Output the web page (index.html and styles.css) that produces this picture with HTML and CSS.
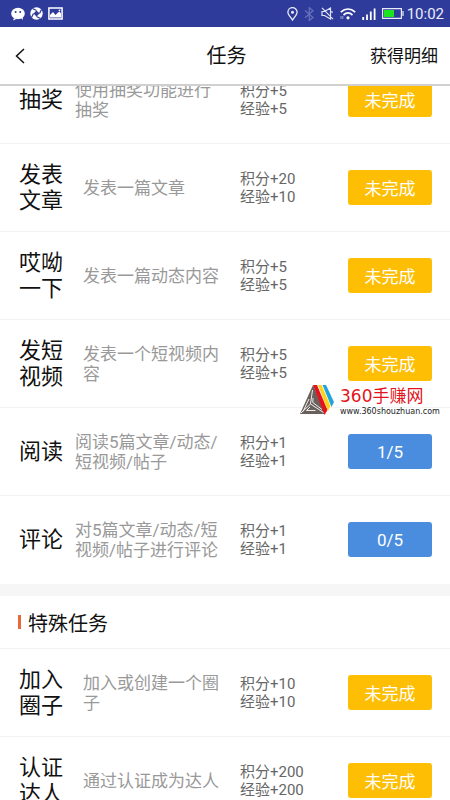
FILE: index.html
```html
<!DOCTYPE html>
<html lang="zh-CN">
<head>
<meta charset="utf-8">
<meta name="viewport" content="width=device-width, initial-scale=1">
<title>任务</title>
<link rel="stylesheet" href="styles.css">
</head>
<body>
<div class="status">
  <div class="status-group">
    <svg width="14" height="14" viewBox="0 0 14 14"><ellipse cx="7" cy="6.5" rx="6.8" ry="5.8" fill="#fff"/><path d="M3 11l-1 2.500 3.500-1.500zM10 11l2 2-.3-3z" fill="#fff"/><circle cx="4.600" cy="5" r="1" fill="#2f3b9b"/><circle cx="9.200" cy="5" r="1" fill="#2f3b9b"/></svg>
    <svg width="13" height="13" viewBox="0 0 13 13"><circle cx="6.500" cy="6.500" r="6.200" fill="#fff"/><path d="M6.500 3.500l3 3-3 3-3-3z" fill="#2f3b9b"/><path d="M6.500 3.500L2.500 1.500M9.500 6.500l2-4M6.500 9.500l4 2M3.500 6.500l-2 4" stroke="#2f3b9b" stroke-width="1.300"/></svg>
    <svg width="15" height="13" viewBox="0 0 15 13"><path d="M.9.900h13.200v11.200H.9z" fill="none" stroke="#fff" stroke-width="1.500"/><path d="M2 10.500V8l3-3 2.500 3L10 5.500l1.500-1 1.500 2v4z" fill="#fff"/><circle cx="11.500" cy="3.300" r=".9" fill="#fff"/></svg>
  </div>
  <div class="status-group right">
    <div class="status-group icons">
      <svg width="11" height="14" viewBox="0 0 11 14"><path d="M5.500 13C3 9.500.9 7.500.9 5.200a4.600 4.600 0 0 1 9.200 0C10.100 7.500 8 9.500 5.500 13z" fill="none" stroke="#e9ebfa" stroke-width="1.300"/><circle cx="5.500" cy="5.200" r="1.500" fill="#e9ebfa"/></svg>
      <svg width="11" height="14" viewBox="0 0 11 14"><path d="M1 3.500l8 7-3.700 3V.7L9 3.700l-8 7" fill="none" stroke="#6570bb" stroke-width="1.300"/></svg>
      <svg width="13" height="13" viewBox="0 0 13 13"><path d="M1 4.500h2.500L9.500 1v11l-6-3.500H1zM1 .8l11 11.400M11 4v2" fill="none" stroke="#dfe3f8" stroke-width="1.200"/></svg>
      <svg width="16" height="13" viewBox="0 0 16 13"><path d="M.8 5.200c4.500-4.300 9.900-4.300 14.400 0M3.500 8c3-2.700 6-2.700 9 0" fill="none" stroke="#fff" stroke-width="1.700"/><circle cx="8" cy="10.800" r="1.600" fill="#fff"/><path d="M1 9v3M2.800 9v3" stroke="#9ca5dd"/></svg>
      <svg width="14" height="12" viewBox="0 0 14 12"><path d="M1.200 12V9M5 12V6.500M8.800 12V3.500M12.600 12V.5" stroke="#fff" stroke-width="1.800"/></svg>
      <svg width="22" height="11" viewBox="0 0 22 11"><path d="M.6.600h18.800v9.800H.6zM21 3v5" fill="none" stroke="#e9ebfa" stroke-width="1.200"/><path d="M2 2h10v7H2z" fill="#1be31e"/></svg>
    </div>
    <span class="clock">10:02</span>
  </div>
</div>
<header class="nav">
  <button class="back" aria-label="返回"><svg width="10" height="16" viewBox="0 0 10 16"><path d="M9 1L1.500 8 9 15" fill="none" stroke="#111" stroke-width="1.500"/></svg></button>
  <h1>任务</h1>
  <a class="detail" href="#">获得明细</a>
</header>
<main>
  <ul class="list scrolled">
    <li><h3>抽奖</h3><p>使用抽奖功能进行抽奖</p><div class="reward">积分+5<br>经验+5</div><button class="btn">未完成</button></li>
    <li><h3>发表文章</h3><p class="inset">发表一篇文章</p><div class="reward">积分+20<br>经验+10</div><button class="btn">未完成</button></li>
    <li><h3>哎呦一下</h3><p class="inset">发表一篇动态内容</p><div class="reward">积分+5<br>经验+5</div><button class="btn">未完成</button></li>
    <li><h3>发短视频</h3><p class="inset">发表一个短视频内容</p><div class="reward">积分+5<br>经验+5</div><button class="btn">未完成</button></li>
    <li><h3>阅读</h3><p>阅读5篇文章/动态/短视频/帖子</p><div class="reward">积分+1<br>经验+1</div><button class="btn progress">1/5</button></li>
    <li><h3>评论</h3><p>对5篇文章/动态/短视频/帖子进行评论</p><div class="reward">积分+1<br>经验+1</div><button class="btn progress">0/5</button></li>
  </ul>
  <h2>特殊任务</h2>
  <ul class="list">
    <li><h3>加入圈子</h3><p class="inset">加入或创建一个圈子</p><div class="reward">积分+10<br>经验+10</div><button class="btn">未完成</button></li>
    <li><h3>认证达人</h3><p class="inset">通过认证成为达人</p><div class="reward">积分+200<br>经验+200</div><button class="btn">未完成</button></li>
  </ul>
</main>
<div class="mark">
  <svg width="35" height="32" viewBox="0 0 35 32">
    <path d="M13 1L0 30h25L14 3z" fill="#69605c"/>
    <path d="M12.500 6L10.500 20 1 29M10.500 20L25 29.500M13 14l-.2 4.500 9.200 7M9 15l-6 12.500M10 23l-3.500 3.500h9" fill="none" stroke="#fff" stroke-width=".9"/>
    <path d="M13 1h4l10.500 25-3 5z" fill="#e3151c"/>
    <path d="M18 1h3.500l9 21-2.500 5z" fill="#ffd21c"/>
    <path d="M22.500 1H26l8 17-2.500 5z" fill="#21a5d8"/>
  </svg>
  <div><div class="mark-name">360手赚网</div><div class="mark-url">www.360shouzhuan.com</div></div>
</div>
</body>
</html>
```
FILE: styles.css
```css
* { box-sizing: border-box; }
body {
  margin: 0;
  height: 100vh;
  display: flex;
  flex-direction: column;
  overflow: hidden;
  position: relative;
  background: #fff;
  color: #111;
  font-family: Roboto, "Noto Sans CJK SC", sans-serif;
}
h1, h2, h3, p, ul { margin: 0; padding: 0; font-weight: 400; }
button { border: 0; padding: 0; font-family: inherit; }
.status {
  flex: none;
  height: 27px;
  padding: 0 6px 0 11px;
  background: #2f3b9b;
  display: flex;
  align-items: center;
  justify-content: space-between;
}
.status-group { display: flex; align-items: center; gap: 5px; }
.icons { gap: 6px; }
.right { gap: 3px; }
.clock { color: #e9ebfa; font-size: 15px; line-height: 20px; }
.nav {
  flex: none;
  height: 59px;
  padding: 0 12px 0 15px;
  display: grid;
  grid-template-columns: 1fr auto 1fr;
  align-items: center;
  border-bottom: 2px solid #d0d0d0;
}
.back { justify-self: start; display: flex; background: none; }
.nav h1 { font-size: 20px; line-height: 28px; }
.detail { justify-self: end; color: #111; font-size: 17px; line-height: 24px; text-decoration: none; }
main { flex: 1; min-height: 0; overflow: hidden; }
.list { list-style: none; }
.scrolled { margin-top: -30px; border-bottom: 12px solid #f6f6f6; }
.list li {
  height: 88px;
  padding: 0 18px 0 19px;
  display: grid;
  grid-template-columns: 44px 149px 1fr 84px;
  column-gap: 12px;
  align-items: center;
  border-bottom: 1px solid #f3f3f3;
}
.list li:last-child { border-bottom-color: transparent; }
.list h3 { font-size: 22px; line-height: 26px; }
.list p { color: #999; font-size: 17px; line-height: 20px; }
.list .inset { padding-left: 8px; }
.reward { padding-left: 4px; color: #666; font-size: 15px; line-height: 18px; }
.btn {
  height: 35px;
  border-radius: 3px;
  background: #fdbe04;
  color: #fff;
  font-size: 17px;
}
.progress { background: #4a8ddf; }
h2 {
  height: 53px;
  padding-left: 18px;
  display: flex;
  align-items: center;
  gap: 7px;
  border-bottom: 1px solid #f3f3f3;
  font-size: 20px;
}
h2::before { content: ""; width: 3px; height: 14px; background: #e8683c; }
.mark {
  position: absolute;
  top: 384px;
  left: 300px;
  display: flex;
  gap: 5px;
}
.mark-name { color: #e3151c; font-family: "DejaVu Sans", "Noto Sans CJK SC", sans-serif; font-size: 17px; line-height: 24px; }
.mark-url { color: #222; font-family: "DejaVu Sans", sans-serif; font-size: 8px; line-height: 8px; }
```
